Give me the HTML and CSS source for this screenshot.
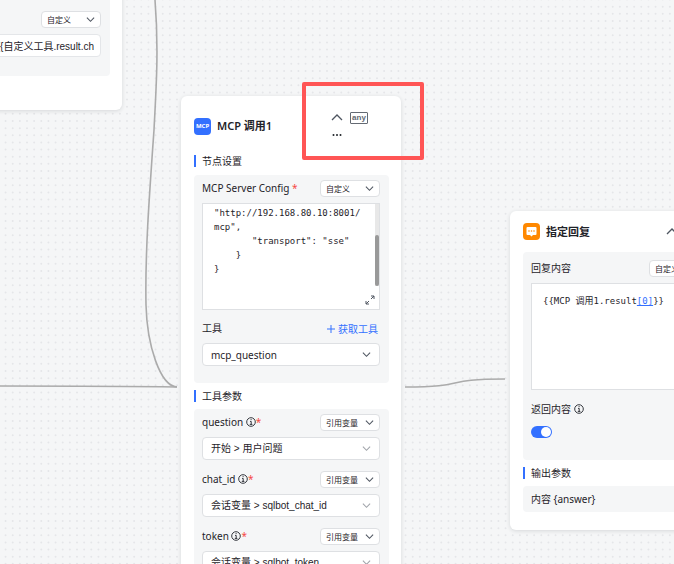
FILE: index.html
```html
<!DOCTYPE html>
<html lang="zh-CN">
<head>
    <meta charset="UTF-8">
    <meta name="viewport" content="width=device-width, initial-scale=1.0">
    <title>工作流</title>
    <link rel="stylesheet" href="styles.css">
</head>
<body>
    <svg class="symbols" aria-hidden="true">
        <symbol id="chevron" viewBox="0 0 10 10">
            <path d="M1 3l4 4 4-4" fill="none" stroke="currentColor" stroke-width="1.2" />
        </symbol>
        <symbol id="info" viewBox="0 0 10 10">
            <circle cx="5" cy="5" r="4.3" fill="none" stroke="currentColor" stroke-width="0.9" />
            <path d="M4 4.4h1.2v3M3.8 7.4h2.6M4.6 2.6h1" fill="none" stroke="currentColor" stroke-width="0.9" />
        </symbol>
    </svg>

    <main class="canvas">
        <svg class="edges" aria-hidden="true">
            <defs>
                <pattern id="dots" x="2" y="-4" width="50" height="50" patternUnits="userSpaceOnUse" viewBox="0 0 7 7">
                    <path d="M.5 .5h6.2M.5 1.5h6.2M.5 2.5h6.2M.5 3.5h6.2M.5 4.5h6.2M.5 5.5h6.2M.5 6.5h6.2" stroke="#e5e6e9" stroke-width="0.28" stroke-linecap="round" stroke-dasharray="0 1" />
                </pattern>
            </defs>
            <rect width="100%" height="100%" fill="url(#dots)" />
            <g fill="none" stroke="#ababab" stroke-width="1.6">
                <path d="M155 0C159 50 156 90 154 130C149 200 145 255 146 305C147 345 160 386 177 387" />
                <path d="M0 386C60 386 120 386 177 387" />
                <path d="M405 387C470 387 440 379 505 379" />
            </g>
        </svg>

        <section class="node node-tool">
            <div class="panel">
                <div class="row row-end">
                    <span class="select small">
                        <select aria-label="参数来源"><option>自定义</option></select>
                        <svg class="arrow"><use href="#chevron" /></svg>
                    </span>
                </div>
                <input class="text-input" type="text" aria-label="参数值" value="{{自定义工具.result.ch">
            </div>
        </section>

        <section class="node node-mcp">
            <header class="node-header">
                <span class="node-icon mcp-icon">MCP</span>
                <h2>MCP 调用1</h2>
                <div class="actions">
                    <button type="button" class="icon-button" aria-label="收起">
                        <svg class="collapse" viewBox="0 0 12 12"><path d="M1 8l5-5 5 5" /></svg>
                    </button>
                    <button type="button" class="any">any</button>
                    <button type="button" class="icon-button" aria-label="更多">
                        <svg class="more" viewBox="0 0 12 12"><circle cx="2.5" cy="6" r="1" /><circle cx="6" cy="6" r="1" /><circle cx="9.5" cy="6" r="1" /></svg>
                    </button>
                </div>
            </header>

            <h3>节点设置</h3>
            <div class="panel">
                <div class="row">
                    <label for="config">MCP Server Config <em>*</em></label>
                    <span class="select small">
                        <select aria-label="配置来源"><option>自定义</option></select>
                        <svg class="arrow"><use href="#chevron" /></svg>
                    </span>
                </div>
                <div class="editor">
                    <textarea id="config" spellcheck="false">
"http://192.168.80.10:8001/
mcp",
       "transport": "sse"
    }
}</textarea>
                    <span class="scrollbar"><span class="thumb"></span></span>
                    <svg class="expand" viewBox="0 0 10 10"><path d="M6 1h3v3M9 1L6 4M4 9H1V6M1 9l3-3" /></svg>
                </div>
                <div class="row tool-row">
                    <label for="tool">工具</label>
                    <button type="button" class="link-button">
                        <svg viewBox="0 0 10 10"><path d="M5 1v8M1 5h8" /></svg>
                        获取工具
                    </button>
                </div>
                <span class="select tool-select">
                    <select id="tool"><option>mcp_question</option></select>
                    <svg class="arrow"><use href="#chevron" /></svg>
                </span>
            </div>

            <h3>工具参数</h3>
            <div class="panel params">
                <div class="field">
                    <div class="row">
                        <label for="question">question <svg class="info"><use href="#info" /></svg><em>*</em></label>
                        <span class="select small">
                            <select aria-label="question 来源"><option>引用变量</option></select>
                            <svg class="arrow"><use href="#chevron" /></svg>
                        </span>
                    </div>
                    <span class="select light">
                        <select id="question"><option>开始 &gt; 用户问题</option></select>
                        <svg class="arrow"><use href="#chevron" /></svg>
                    </span>
                </div>
                <div class="field">
                    <div class="row">
                        <label for="chat-id">chat_id <svg class="info"><use href="#info" /></svg><em>*</em></label>
                        <span class="select small">
                            <select aria-label="chat_id 来源"><option>引用变量</option></select>
                            <svg class="arrow"><use href="#chevron" /></svg>
                        </span>
                    </div>
                    <span class="select light">
                        <select id="chat-id"><option>会话变量 &gt; sqlbot_chat_id</option></select>
                        <svg class="arrow"><use href="#chevron" /></svg>
                    </span>
                </div>
                <div class="field">
                    <div class="row">
                        <label for="token">token <svg class="info"><use href="#info" /></svg><em>*</em></label>
                        <span class="select small">
                            <select aria-label="token 来源"><option>引用变量</option></select>
                            <svg class="arrow"><use href="#chevron" /></svg>
                        </span>
                    </div>
                    <span class="select light">
                        <select id="token"><option>会话变量 &gt; sqlbot_token</option></select>
                        <svg class="arrow"><use href="#chevron" /></svg>
                    </span>
                </div>
            </div>
        </section>

        <section class="node node-reply">
            <header class="node-header">
                <span class="node-icon reply-icon">
                    <svg viewBox="0 0 17 17"><path d="M4.5 4h8a1 1 0 0 1 1 1v6a1 1 0 0 1-1 1H10l-1.5 1.5L7 12H4.5a1 1 0 0 1-1-1V5a1 1 0 0 1 1-1z" fill="#fff" /><g fill="#ff8800"><circle cx="6" cy="8" r="0.8" /><circle cx="8.5" cy="8" r="0.8" /><circle cx="11" cy="8" r="0.8" /></g></svg>
                </span>
                <h2>指定回复</h2>
                <div class="actions">
                    <button type="button" class="icon-button" aria-label="收起">
                        <svg class="collapse" viewBox="0 0 12 12"><path d="M1 8l5-5 5 5" /></svg>
                    </button>
                </div>
            </header>
            <div class="panel">
                <div class="row">
                    <span class="label">回复内容</span>
                    <span class="select small">
                        <select aria-label="回复来源"><option>自定义</option></select>
                        <svg class="arrow"><use href="#chevron" /></svg>
                    </span>
                </div>
                <div class="editor">
                    <div class="code" contenteditable="true" role="textbox" aria-label="回复内容" spellcheck="false">{{MCP 调用1.result<a href="#">[0]</a>}}</div>
                </div>
                <label class="switch-label" for="return">返回内容 <svg class="info"><use href="#info" /></svg></label>
                <input class="switch" type="checkbox" id="return" checked>
            </div>
            <h3>输出参数</h3>
            <div class="panel output">内容 {answer}</div>
        </section>

        <div class="highlight"></div>
    </main>
</body>
</html>
```

FILE: styles.css
```css
* {
    box-sizing: border-box;
}

body {
    margin: 0;
    background-color: #f5f6f7;
    color: #1f2329;
    font-family: "Noto Sans", "Noto Sans CJK SC", sans-serif;
    font-size: 10px;
    line-height: 16px;
}

button,
input,
select,
textarea {
    font: inherit;
    color: inherit;
}

h2,
h3 {
    margin: 0;
}

.symbols {
    position: absolute;
    width: 0;
    height: 0;
}

.canvas {
    position: relative;
    height: 100vh;
    overflow: hidden;
}

.edges {
    position: absolute;
    width: 100%;
    height: 100%;
}

/* nodes on the canvas */
.node {
    position: absolute;
    width: 220px;
    padding: 12px 12px 18px 13px;
    background-color: #fff;
    border-radius: 6px;
    box-shadow: 0 1px 4px rgba(31, 35, 41, 0.14);
}

.node-tool {
    left: -98px;
    top: -20px;
    padding-bottom: 34px;
}

.node-tool .panel {
    padding: 19px 9px 19px;
}

.node-mcp {
    left: 181px;
    top: 96px;
}

.node-reply {
    left: 510px;
    top: 211px;
}

.node-header {
    display: flex;
    align-items: center;
    gap: 6px;
}

.node-mcp .node-header {
    height: 36px;
}

.node-header h2 {
    flex: 1;
    font-size: 11px;
    font-weight: 600;
}

.node-reply .node-header {
    height: 17px;
    margin-bottom: 12px;
}

.node-icon {
    display: flex;
    align-items: center;
    justify-content: center;
    width: 17px;
    height: 17px;
    border-radius: 4px;
}

.mcp-icon {
    background-color: #3370ff;
    color: #fff;
    font-size: 6px;
    font-weight: 700;
}

.reply-icon {
    background-color: #ff8800;
}

.actions {
    display: flex;
    flex-wrap: wrap;
    align-items: center;
    gap: 5px 7px;
    width: 52px;
}

.node-mcp .actions {
    width: 58px;
    padding-right: 10px;
}

.icon-button {
    display: flex;
    padding: 0;
    border: none;
    background: none;
}

.collapse {
    width: 12px;
    height: 12px;
    fill: none;
    stroke: #4e5560;
    stroke-width: 1.3;
}

.more {
    width: 12px;
    height: 12px;
    fill: #1f2329;
}

.any {
    width: 18px;
    height: 12px;
    padding: 0;
    border: 1px solid #646a73;
    border-radius: 1px;
    background: none;
    color: #646a73;
    font-family: "Liberation Sans", sans-serif;
    font-size: 8px;
    font-weight: 700;
    line-height: 8px;
}

h3 {
    display: flex;
    align-items: center;
    gap: 6px;
    height: 26px;
    font-size: 10px;
    font-weight: 400;
}

h3::before {
    content: "";
    width: 2px;
    height: 12px;
    background-color: #3370ff;
}

.node-mcp .node-header + h3 {
    height: 28px;
    margin-top: 3px;
}

/* forms */
.panel {
    padding: 5px 9px 17px 8px;
    background-color: #f5f6f7;
    border-radius: 4px;
}

.row {
    display: flex;
    align-items: center;
    justify-content: space-between;
    height: 17px;
    margin-bottom: 6px;
}

.row-end {
    justify-content: flex-end;
}

.row label,
.switch-label {
    display: flex;
    align-items: center;
    white-space: pre;
}

.row label,
.label {
    padding-bottom: 2px;
}

em {
    color: #f54a45;
    font-style: normal;
}

.info {
    width: 10px;
    height: 10px;
}

.select {
    display: flex;
    position: relative;
    height: 23px;
}

.select select {
    width: 100%;
    padding: 0 8px;
    appearance: none;
    border: 1px solid #dee0e3;
    border-radius: 4px;
    background-color: #fff;
}

.small {
    width: 60px;
    height: 17px;
    font-size: 8px;
}

.small select {
    padding: 0 5px;
}

.arrow {
    position: absolute;
    top: 50%;
    right: 6px;
    width: 9px;
    height: 9px;
    margin-top: -5px;
    color: #4e5560;
    pointer-events: none;
}

.tool-select .arrow,
.light .arrow {
    right: 9px;
}

.light .arrow {
    color: #a0a4aa;
}

.light,
.text-input {
    font-family: "Liberation Sans", "Noto Sans CJK SC", sans-serif;
}

.text-input {
    display: block;
    width: 100%;
    height: 23px;
    padding: 0 6px;
    border: 1px solid #e4e6e9;
    border-radius: 4px;
    text-align: right;
}

.editor {
    position: relative;
    height: 107px;
    border: 1px solid #dee0e3;
    background-color: #fff;
}

.editor textarea,
.code {
    display: block;
    width: 100%;
    height: 100%;
    padding: 2px 11px;
    border: none;
    resize: none;
    overflow: hidden;
    background: none;
    font-family: "DejaVu Sans Mono", "Noto Sans CJK SC", monospace;
    font-size: 9px;
    line-height: 14px;
    white-space: pre;
}

.code {
    padding-top: 10px;
}

.code a {
    color: #3370ff;
}

.scrollbar {
    position: absolute;
    top: 0;
    right: 0;
    width: 4px;
    height: 82px;
    background-color: #e8e8e8;
}

.thumb {
    position: absolute;
    bottom: 0;
    width: 4px;
    height: 51px;
    border-radius: 2px;
    background-color: #999;
}

.expand {
    position: absolute;
    right: 4px;
    bottom: 4px;
    width: 10px;
    height: 10px;
    fill: none;
    stroke: #4e5560;
}

.tool-row {
    margin-top: 10px;
}

.link-button {
    display: flex;
    align-items: center;
    gap: 2px;
    padding: 0 2px;
    border: none;
    background: none;
    color: #3370ff;
}

.link-button svg {
    width: 10px;
    height: 10px;
    fill: none;
    stroke: currentColor;
}

.params {
    display: grid;
    gap: 11px;
}

.node-reply .panel {
    padding-top: 8px;
    padding-bottom: 22px;
}

.switch-label {
    width: max-content;
    margin-top: 11px;
}

.switch {
    display: flex;
    align-items: center;
    justify-content: flex-end;
    appearance: none;
    width: 21px;
    height: 12px;
    margin: 9px 0 0;
    padding: 1px;
    border-radius: 6px;
    background-color: #3370ff;
}

.switch::before {
    content: "";
    width: 10px;
    height: 10px;
    border-radius: 50%;
    background-color: #fff;
}

.node-reply .output {
    padding-top: 5px;
    padding-bottom: 5px;
}

.highlight {
    position: absolute;
    left: 302px;
    top: 82px;
    width: 122px;
    height: 78px;
    border: 4px solid #ff5555;
    border-radius: 2px;
    pointer-events: none;
}
```
